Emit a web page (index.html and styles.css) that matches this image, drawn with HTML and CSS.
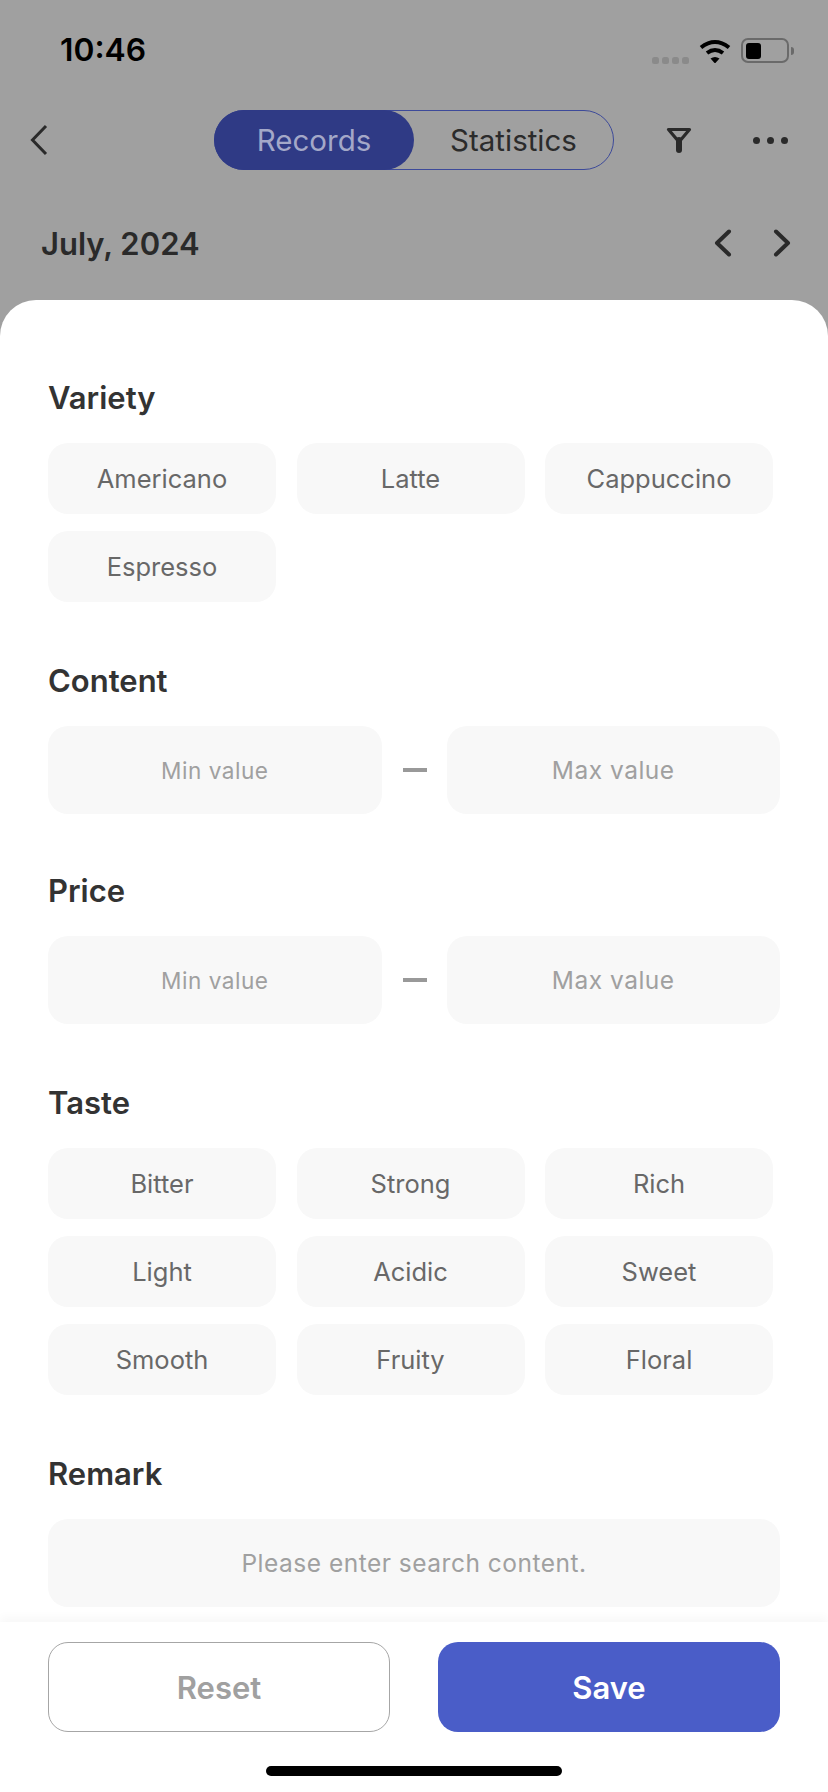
FILE: index.html
```html
<!DOCTYPE html>
<html lang="en">
<head>
<meta charset="utf-8">
<title>Records filter</title>
<link rel="stylesheet" href="styles.css">
</head>
<body>
<div class="page">
  <header class="status">
    <span class="time">10:46</span>
    <div class="status-icons">
      <div class="signal"><i></i><i></i><i></i><i></i></div>
      <svg class="wifi" viewBox="0 0 32 24"><path d="M2 8.500Q16 -2.500 30 8.500" fill="none" stroke="#000" stroke-width="4"/><path d="M8 14Q16 8 24 14" fill="none" stroke="#000" stroke-width="4"/><path d="M11.500 19.500Q16 16.500 20.500 19.500L16 24.500Z" fill="#000"/></svg>
      <div class="battery"><div class="battery-body"><div class="battery-level"></div></div><div class="battery-nub"></div></div>
    </div>
  </header>
  <nav class="nav">
    <svg class="back" viewBox="0 0 18 32"><path d="M16 2L2.500 16L16 30" fill="none" stroke="#2a2a2a" stroke-width="3"/></svg>
    <div class="segment">
      <span class="seg seg-on">Records</span>
      <span class="seg">Statistics</span>
    </div>
    <svg class="filter" viewBox="0 0 26 26"><path d="M2.500 2.500H23.500L13 15Z" fill="none" stroke="#2a2a2a" stroke-width="3.200" stroke-linejoin="round"/><path d="M13 13V23" fill="none" stroke="#2a2a2a" stroke-width="6" stroke-linecap="round"/></svg>
    <div class="dots"><i></i><i></i><i></i></div>
  </nav>
  <div class="month">
    <span class="month-label">July, 2024</span>
    <div class="month-arrows">
      <svg class="chev" viewBox="0 0 18 28"><path d="M15 2.500L3 14L15 25.500" fill="none" stroke="#2a2a2a" stroke-width="4" stroke-linecap="round" stroke-linejoin="round"/></svg>
      <svg class="chev" viewBox="0 0 18 28"><path d="M3 2.500L15 14L3 25.500" fill="none" stroke="#2a2a2a" stroke-width="4" stroke-linecap="round" stroke-linejoin="round"/></svg>
    </div>
  </div>
  <main class="sheet">
    <div class="sheet-body">
      <section class="block">
        <h2 class="title">Variety</h2>
        <div class="chips">
          <div class="chip">Americano</div><div class="chip">Latte</div><div class="chip">Cappuccino</div>
          <div class="chip">Espresso</div>
        </div>
      </section>
      <section class="block">
        <h2 class="title">Content</h2>
        <div class="range">
          <div class="field field-min">Min value</div><div class="dash"></div><div class="field">Max value</div>
        </div>
      </section>
      <section class="block block-tight">
        <h2 class="title">Price</h2>
        <div class="range">
          <div class="field field-min">Min value</div><div class="dash"></div><div class="field">Max value</div>
        </div>
      </section>
      <section class="block">
        <h2 class="title">Taste</h2>
        <div class="chips">
          <div class="chip">Bitter</div><div class="chip">Strong</div><div class="chip">Rich</div>
          <div class="chip">Light</div><div class="chip">Acidic</div><div class="chip">Sweet</div>
          <div class="chip">Smooth</div><div class="chip">Fruity</div><div class="chip">Floral</div>
        </div>
      </section>
      <section class="block">
        <h2 class="title">Remark</h2>
        <div class="field">Please enter search content.</div>
      </section>
    </div>
    <footer class="footer">
      <div class="actions">
        <div class="btn btn-reset">Reset</div>
        <div class="btn btn-save">Save</div>
      </div>
      <div class="home"></div>
    </footer>
  </main>
</div>
</body>
</html>
```
FILE: styles.css
```css
* { box-sizing: border-box; }
html, body { margin: 0; padding: 0; }
body { font-family: Inter, "Liberation Sans", sans-serif; background: #a0a0a0; }
.page { width: 828px; height: 1792px; display: flex; flex-direction: column; background: #a0a0a0; overflow: hidden; }

.status { height: 100px; padding: 30px 34px 0 60px; display: flex; justify-content: space-between; align-items: flex-start; }
.time { font-size: 31.800px; font-weight: 600; line-height: 40px; color: #000; }
.status-icons { display: flex; align-items: center; gap: 10px; padding-top: 7px; }
.signal { display: flex; gap: 3px; margin-top: 20px; margin-left: 1px; }
.signal i { width: 7px; height: 7px; border-radius: 2.500px; background: #8a8a8a; }
.wifi { width: 32px; height: 24px; display: block; }
.battery { display: flex; align-items: center; gap: 2px; }
.battery-body { width: 48px; height: 25px; border: 2px solid #6a6a6a; border-radius: 7px; padding: 2.500px 3px; }
.battery-level { width: 15px; height: 16px; background: #000; border-radius: 3px; }
.battery-nub { width: 3px; height: 8px; background: #6a6a6a; border-radius: 0 3px 3px 0; }

.nav { height: 80px; padding: 0 39px 0 30px; display: flex; align-items: center; }
.back { width: 18px; height: 32px; display: block; }
.segment { width: 400px; height: 60px; margin-left: 166px; display: flex; border: 1px solid #3d4a9a; border-radius: 30px; }
.seg { width: 199px; display: flex; align-items: center; justify-content: center; font-size: 29.500px; color: #2b2b2b; }
.seg-on { width: 200px; margin: -1px 0 -1px -1px; background: #2f3a85; color: #a4a8c8; border-radius: 30px; }
.filter { width: 26px; height: 26px; margin-left: 52px; display: block; }
.dots { margin-left: 61px; display: flex; gap: 7px; }
.dots i { width: 7px; height: 7px; border-radius: 50%; background: #2a2a2a; }

.month { height: 60px; margin-top: 33px; padding: 0 37px 0 41px; display: flex; align-items: center; justify-content: space-between; }
.month-label { font-size: 31px; font-weight: 600; color: #2a2a2a; }
.month-arrows { display: flex; gap: 41px; }
.chev { width: 18px; height: 28px; display: block; }

.sheet { margin-top: 27px; flex: 1; background: #fff; border-radius: 36px 36px 0 0; display: flex; flex-direction: column; }
.sheet-body { flex: 1; padding: 80px 48px 0; display: flex; flex-direction: column; }
.block + .block { margin-top: 61px; }
.block + .block-tight { margin-top: 59px; }
.title { margin: 0 0 27px; font-size: 31px; line-height: 36px; font-weight: 600; color: #333; }
.chips { display: grid; grid-template-columns: repeat(3, 228px); column-gap: 20.500px; row-gap: 17px; }
.chip { height: 71px; border-radius: 20px; background: #f8f8f8; display: flex; align-items: center; justify-content: center; font-size: 25.500px; color: #686868; }
.range { display: flex; align-items: center; }
.field { height: 88px; flex: 1; border-radius: 20px; background: #f8f8f8; display: flex; align-items: center; justify-content: center; font-size: 24.500px; letter-spacing: 0.5px; color: #a0a0a0; }
.field-min { font-size: 22.600px; }
.dash { width: 24px; height: 4px; margin: 0 20px 0 21px; background: #999; }

.footer { height: 170px; background: #fff; box-shadow: 0 -4px 10px rgba(0,0,0,0.035); padding: 20px 48px 0; }
.actions { display: flex; justify-content: space-between; }
.btn { width: 342px; height: 90px; border-radius: 20px; display: flex; align-items: center; justify-content: center; font-size: 31px; font-weight: 600; }
.btn-reset { border: 1px solid #a6a6a6; color: #a0a0a0; }
.btn-save { background: #4a5dc8; color: #fff; }
.home { width: 296px; height: 10px; margin: 34px auto 0; border-radius: 5px; background: #000; }
```
